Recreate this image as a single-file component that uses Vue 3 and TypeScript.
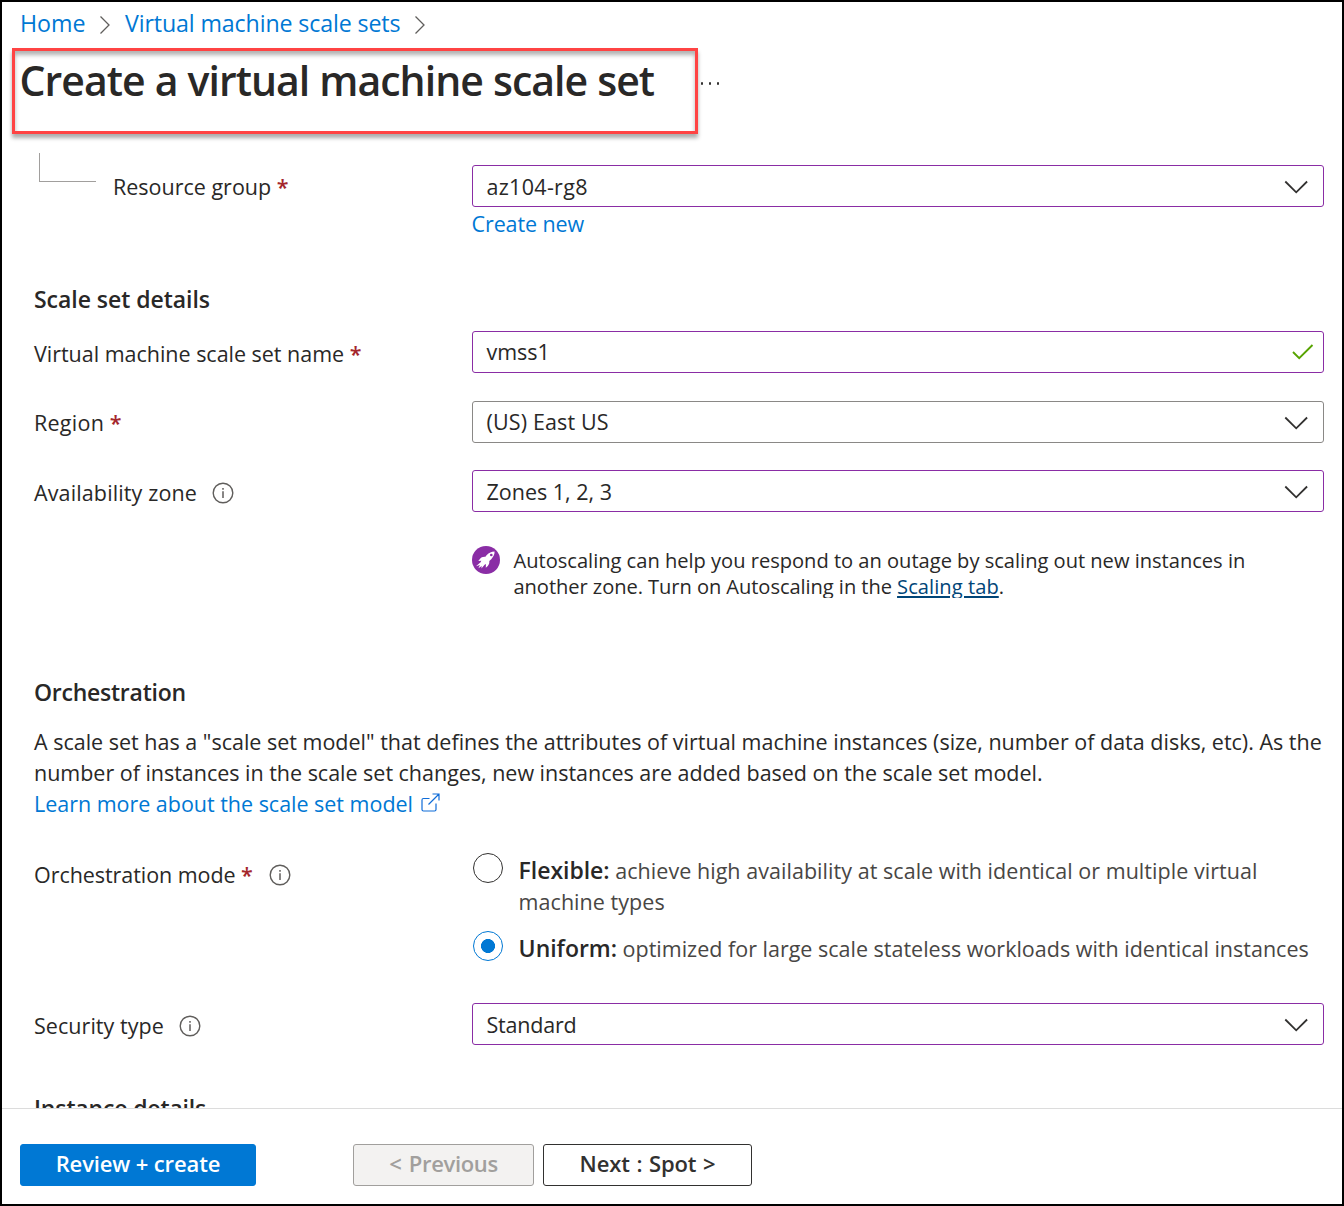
<script setup lang="ts">
import { ref } from 'vue'

const crumbs = ['Home', 'Virtual machine scale sets']

const modes = [
  {
    id: 'flexible',
    name: 'Flexible:',
    text: 'achieve high availability at scale with identical or multiple virtual machine types',
  },
  {
    id: 'uniform',
    name: 'Uniform:',
    text: 'optimized for large scale stateless workloads with identical instances',
  },
]
const mode = ref('uniform')
</script>

<template>
  <div class="page">
    <nav class="crumbs">
      <template v-for="(crumb, i) in crumbs" :key="crumb">
        <a :class="['crumb', { long: i === 1 }]">{{ crumb }}</a>
        <svg class="sep" width="12" height="20" viewBox="0 0 12 20"><path d="M1.5 1.5 10 10 1.5 18.5" /></svg>
      </template>
    </nav>

    <header class="title-row">
      <div class="title-box"><h1>Create a virtual machine scale set</h1></div>
      <div class="more"><i></i><i></i><i></i></div>
    </header>

    <main class="form">
      <div class="branch"></div>
      <div class="row first">
        <div class="label nested">Resource group<b class="star">*</b></div>
        <div class="field changed">
          <span class="wide">az104-rg8</span>
          <svg class="chev" width="24" height="14" viewBox="0 0 24 14"><path d="M1.3 1.5 12.2 12.3 23.1 1.5" /></svg>
        </div>
      </div>
      <a class="create">Create new</a>

      <h2 class="details">Scale set details</h2>
      <div class="row name">
        <div class="label low tight">Virtual machine scale set name<b class="star">*</b></div>
        <div class="field changed raised">
          <span class="tight">vmss1</span>
          <svg class="check" width="22" height="16" viewBox="0 0 22 16"><path d="M1 8 7.2 14.2 20.5 1" /></svg>
        </div>
      </div>
      <div class="row region">
        <div class="label region-label">Region<b class="star">*</b></div>
        <div class="field raised">
          <span class="mid">(US) East US</span>
          <svg class="chev" width="24" height="14" viewBox="0 0 24 14"><path d="M1.3 1.5 12.2 12.3 23.1 1.5" /></svg>
        </div>
      </div>
      <div class="row zone">
        <div class="label low mid">
          Availability zone
          <svg class="info" width="22" height="22" viewBox="0 0 22 22"><circle cx="11" cy="11" r="9.8" /><path d="M11 9.3V16M11 6v1.8" /></svg>
        </div>
        <div class="field changed">
          <span>Zones 1, 2, 3</span>
          <svg class="chev" width="24" height="14" viewBox="0 0 24 14"><path d="M1.3 1.5 12.2 12.3 23.1 1.5" /></svg>
        </div>
      </div>

      <div class="note">
        <svg width="28" height="28" viewBox="0 0 28 28">
          <circle cx="14" cy="14" r="14" fill="#8a2da5" />
          <path fill="#fff" d="M22.6 5.6c-3.2.1-5.7 1.2-7.8 3.4l-1.7 1.9c-2.3-.2-3.9.5-5.2 2l-1.6 2.1 3-.3-.7 1.5-4.6 4 3.9-1.3-1.5 3.3 3.3-2.2-.3 2.4 3.2-3.6 1.3-.8-.1 3.7 2-1.8c1.2-1.3 1.7-2.9 1.5-4.9l1.9-1.8c2.3-2.3 3.4-4.6 3.4-7.6z" />
          <circle cx="19.3" cy="9" r="1.3" fill="#8a2da5" />
        </svg>
        <p>
          Autoscaling can help you respond to an outage by scaling out new instances in<br />
          <span class="second">another zone. Turn on Autoscaling in the <a>Scaling tab</a>.</span>
        </p>
      </div>

      <h2 class="orchestration">Orchestration</h2>
      <p class="about">
        A scale set has a "scale set model" that defines the attributes of virtual machine instances (size, number of data disks, etc). As the<br />
        <span class="tight">number of instances in the scale set changes, new instances are added based on the scale set model.</span><br />
        <a class="learn tight">Learn more about the scale set model<svg width="19" height="19" viewBox="0 0 19 19"><path d="M8.5 5.5H2.5Q1 5.5 1 7V16.5Q1 18 2.5 18H13.5Q15 18 15 16.5V10.5M7.5 11.5 18 1M11.5 1H18V7.5" /></svg></a>
      </p>

      <div class="row mode">
        <div class="label mode-label">
          Orchestration mode<b class="star">*</b>
          <svg class="info" width="22" height="22" viewBox="0 0 22 22"><circle cx="11" cy="11" r="9.8" /><path d="M11 9.3V16M11 6v1.8" /></svg>
        </div>
        <div class="options">
          <div v-for="m in modes" :key="m.id" :class="['option', m.id]" @click="mode = m.id">
            <span :class="['radio', { on: mode === m.id }]"></span>
            <p><strong>{{ m.name }}</strong> {{ m.text }}</p>
          </div>
        </div>
      </div>

      <div class="row security">
        <div class="label low security-label">
          Security type
          <svg class="info" width="22" height="22" viewBox="0 0 22 22"><circle cx="11" cy="11" r="9.8" /><path d="M11 9.3V16M11 6v1.8" /></svg>
        </div>
        <div class="field changed">
          <span class="tighter">Standard</span>
          <svg class="chev" width="24" height="14" viewBox="0 0 24 14"><path d="M1.3 1.5 12.2 12.3 23.1 1.5" /></svg>
        </div>
      </div>

      <h2 class="instance">Instance details</h2>
    </main>

    <footer class="actions">
      <button class="primary">Review + create</button>
      <button class="previous" disabled>&lt; Previous</button>
      <button class="next">Next : Spot &gt;</button>
    </footer>
  </div>
</template>

<style>
body {
  margin: 0;
}
</style>

<style scoped>
.page {
  box-sizing: border-box;
  width: 1344px;
  height: 1206px;
  border: 2px solid #000;
  background: #fff;
  color: #292827;
  font: 21.5px/31px "Open Sans", "Noto Sans", sans-serif;
  display: flex;
  flex-direction: column;
  overflow: hidden;
}
h1, h2, p {
  margin: 0;
}
svg {
  flex: none;
}
a {
  color: #0078d4;
}
.crumbs {
  display: flex;
  align-items: center;
  height: 46px;
  padding-left: 18px;
  flex: none;
}
.crumb {
  font-size: 23.2px;
  line-height: 42px;
  height: 46px;
  margin-right: 13.5px;
}
.crumb.long {
  letter-spacing: -0.12px;
}
.sep {
  margin: 0 14px 0 0;
}
.sep path {
  fill: none;
  stroke: #605e5c;
  stroke-width: 1.3;
}
.title-row {
  display: flex;
  height: 86px;
  padding-left: 10px;
  flex: none;
}
.title-box {
  box-sizing: border-box;
  width: 686px;
  height: 86px;
  border: 3px solid #ff4343;
  padding-left: 4.6px;
  box-shadow: 0 4px 4px rgba(0, 0, 0, 0.33), inset 0 4px 4px rgba(0, 0, 0, 0.3);
}
h1 {
  font-size: 41px;
  font-weight: 600;
  line-height: 58px;
  letter-spacing: -0.98px;
  word-spacing: 0.4px;
  white-space: nowrap;
}
.more {
  display: flex;
  gap: 5.5px;
  padding: 34px 0 0 2.5px;
}
.more i {
  width: 2.5px;
  height: 2.5px;
  border-radius: 1px;
  background: #323130;
}
.form {
  flex: 1;
  min-height: 0;
  overflow: hidden;
  display: flex;
  flex-direction: column;
  padding: 19px 18px 0 32px;
}
.form > * {
  flex: none;
}
.branch {
  width: 56px;
  height: 28px;
  margin-left: 5px;
  border-left: 1px solid #a19f9d;
  border-bottom: 1px solid #a19f9d;
}
.row {
  display: flex;
  align-items: flex-start;
}
.first {
  margin-top: -17px;
  height: 42px;
}
.label {
  box-sizing: border-box;
  width: 438px;
  flex: none;
  display: flex;
  align-items: center;
  height: 44px;
  line-height: 42px;
}
.low {
  height: 46px;
}
.nested {
  padding-left: 79px;
}
.wide {
  letter-spacing: 0.3px;
}
.region-label {
  letter-spacing: 0.25px;
}
.mode-label {
  letter-spacing: -0.06px;
}
.security-label {
  letter-spacing: 0.05px;
}
.mid {
  letter-spacing: 0.13px;
}
.tight {
  letter-spacing: -0.02px;
}
.tighter {
  letter-spacing: -0.2px;
}
.star {
  color: #a4262c;
  font-weight: 600;
  margin-left: 5.6px;
  letter-spacing: 0;
}
.info {
  margin: -1px 0 0 14.7px;
}
.info circle {
  fill: none;
  stroke: #605e5c;
  stroke-width: 1.4;
}
.info path {
  fill: none;
  stroke: #605e5c;
  stroke-width: 1.5;
}
.field {
  box-sizing: border-box;
  flex: 1;
  height: 42px;
  border: 1px solid #8a8886;
  border-radius: 3px;
  padding: 0 15px 0 13.5px;
  display: flex;
  align-items: center;
  justify-content: space-between;
}
.changed {
  border-color: #8a2da5;
}
.raised span {
  padding-bottom: 2px;
}
.chev {
  margin-top: 2px;
}
.chev path {
  fill: none;
  stroke: #323130;
  stroke-width: 1.8;
}
.check {
  margin-right: -6px;
}
.check path {
  fill: none;
  stroke: #57a300;
  stroke-width: 1.9;
}
.create {
  margin-left: 437.5px;
  line-height: 34px;
  letter-spacing: -0.1px;
}
h2 {
  font-size: 23px;
  font-weight: 600;
  line-height: 30px;
  letter-spacing: -0.04px;
}
.details {
  margin-top: 43px;
}
.name {
  margin-top: 17px;
  height: 42px;
}
.region {
  margin-top: 28px;
  height: 42px;
}
.zone {
  margin-top: 27px;
  height: 42px;
}
.note {
  display: flex;
  gap: 13.5px;
  height: 52px;
  overflow: hidden;
  margin: 34px 0 0 438px;
  font-size: 20.1px;
  line-height: 26px;
  letter-spacing: -0.01px;
  white-space: nowrap;
}
.note p {
  padding-top: 2px;
}
.second {
  letter-spacing: -0.06px;
}
.note a {
  color: #004578;
  text-decoration: underline;
  text-decoration-thickness: 2px;
  text-underline-offset: 2px;
  letter-spacing: 0.06px;
}
.orchestration {
  margin-top: 79px;
  letter-spacing: -0.25px;
}
.about {
  margin-top: 19px;
  height: 93px;
  white-space: nowrap;
}
.learn svg {
  margin-left: 8px;
  vertical-align: 0;
}
.learn path {
  fill: none;
  stroke: #0f6cd8;
  stroke-width: 1.2;
}
.mode {
  margin-top: 36px;
}
.mode .label {
  height: 39px;
}
.mode .info {
  margin: 0 0 0 16px;
}
.options {
  flex: 1;
  display: flex;
  flex-direction: column;
  gap: 16px;
}
.option {
  display: flex;
  align-items: flex-start;
}
.option p {
  flex: 1;
  color: #484644;
  margin-right: -10px;
  padding-right: 20px;
}
.flexible p {
  letter-spacing: 0.045px;
}
.option strong {
  font-size: 23px;
  line-height: 29px;
  font-weight: 600;
  letter-spacing: -0.03px;
  color: #292827;
}
.radio {
  box-sizing: border-box;
  width: 30px;
  height: 30px;
  margin: -2px 15.6px 0 1px;
  border: 1px solid #323130;
  border-radius: 50%;
  flex: none;
}
.radio.on {
  border-color: #0078d4;
  background: radial-gradient(circle, #0078d4 6.7px, transparent 7.3px);
}
.security {
  margin-top: 39px;
  height: 42px;
}
.instance {
  margin-top: 48px;
  letter-spacing: -0.15px;
}
.actions {
  box-sizing: border-box;
  flex: none;
  height: 96px;
  border-top: 1px solid #dcdcdc;
  padding: 35px 0 0 18px;
  display: flex;
}
button {
  box-sizing: border-box;
  height: 42px;
  border-radius: 3px;
  font: 600 22px/36px "Open Sans", "Noto Sans", sans-serif;
  letter-spacing: -0.12px;
  padding: 0 0 4px;
  white-space: pre;
}
.primary {
  width: 236px;
  border: 1px solid #0078d4;
  background: #0078d4;
  color: #fff;
}
.previous {
  width: 181px;
  margin-left: 97px;
  border: 1px solid #a19f9d;
  background: #f3f2f1;
  color: #a19f9d;
  letter-spacing: -0.35px;
  word-spacing: 2px;
}
.next {
  width: 209px;
  margin-left: 9px;
  border: 1px solid #323130;
  background: #fff;
  color: #323130;
  word-spacing: 1px;
}
</style>
